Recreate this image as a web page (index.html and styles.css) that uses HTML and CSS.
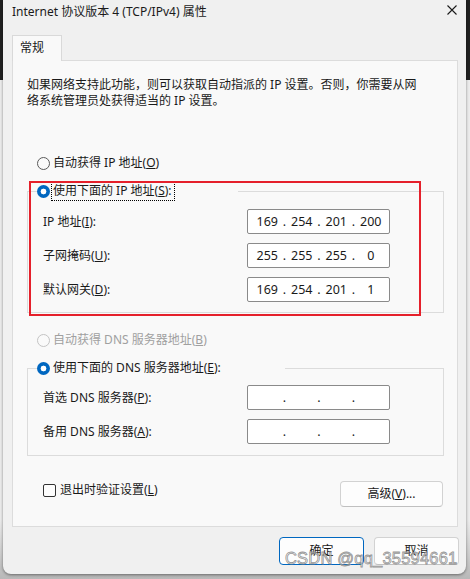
FILE: index.html
```html
<!DOCTYPE html>
<html lang="zh-CN">
<head>
<meta charset="utf-8">
<title>Internet 协议版本 4 (TCP/IPv4) 属性</title>
<link rel="stylesheet" href="styles.css">
</head>
<body>
<div class="window">
  <div class="titlebar">
    <span class="title">Internet 协议版本 4 (TCP/IPv4) 属性</span>
    <svg class="close" width="10" height="10" viewBox="0 0 10 10"><path d="M0.5 0.5 L9.5 9.5 M9.5 0.5 L0.5 9.5" stroke="#1a1a1a" stroke-width="1.1" fill="none"/></svg>
  </div>
  <div class="tabs"><div class="tab">常规</div></div>
  <div class="panel">
    <p class="intro">如果网络支持此功能，则可以获取自动指派的 IP 设置。否则，你需要从网<br>络系统管理员处获得适当的 IP 设置。</p>

    <div class="radio-row"><span class="radio"></span><span>自动获得 IP 地址(<u>O</u>)</span></div>

    <fieldset class="group">
      <legend class="legend ip-legend"><span class="radio on"></span><span class="focus">使用下面的 IP 地址(<u>S</u>):</span></legend>
      <div class="field"><span class="label">IP 地址(<u>I</u>):</span>
        <div class="ipbox"><span class="seg">169</span><span class="dot">.</span><span class="seg">254</span><span class="dot">.</span><span class="seg">201</span><span class="dot">.</span><span class="seg">200</span></div></div>
      <div class="field"><span class="label">子网掩码(<u>U</u>):</span>
        <div class="ipbox"><span class="seg">255</span><span class="dot">.</span><span class="seg">255</span><span class="dot">.</span><span class="seg">255</span><span class="dot">.</span><span class="seg">0</span></div></div>
      <div class="field"><span class="label">默认网关(<u>D</u>):</span>
        <div class="ipbox"><span class="seg">169</span><span class="dot">.</span><span class="seg">254</span><span class="dot">.</span><span class="seg">201</span><span class="dot">.</span><span class="seg">1</span></div></div>
    </fieldset>

    <div class="radio-row dns-auto disabled"><span class="radio"></span><span>自动获得 DNS 服务器地址(<u>B</u>)</span></div>

    <fieldset class="group dns-group">
      <legend class="legend dns-legend"><span class="radio on"></span><span>使用下面的 DNS 服务器地址(<u>E</u>):</span></legend>
      <div class="field first"><span class="label">首选 DNS 服务器(<u>P</u>):</span>
        <div class="ipbox"><span class="seg"></span><span class="dot">.</span><span class="seg"></span><span class="dot">.</span><span class="seg"></span><span class="dot">.</span><span class="seg"></span></div></div>
      <div class="field"><span class="label">备用 DNS 服务器(<u>A</u>):</span>
        <div class="ipbox"><span class="seg"></span><span class="dot">.</span><span class="seg"></span><span class="dot">.</span><span class="seg"></span><span class="dot">.</span><span class="seg"></span></div></div>
    </fieldset>

    <div class="bottom-row">
      <label class="check"><span class="box"></span><span>退出时验证设置(<u>L</u>)</span></label>
      <button class="btn adv">高级(<u>V</u>)...</button>
    </div>

    <div class="highlight"></div>
  </div>
  <div class="footer">
    <button class="btn ok">确定</button>
    <button class="btn">取消</button>
  </div>
  <div class="watermark">CSDN @qq_35594661</div>
</div>
</body>
</html>
```
FILE: styles.css
```css
* { box-sizing: border-box; }
html, body { margin: 0; padding: 0; }
body {
  width: 470px;
  height: 579px;
  overflow: hidden;
  background: linear-gradient(to bottom, #202020 0, #202020 80px, #ececec 80px, #ececec 520px, #b8b8b8 579px);
  font-family: "Noto Sans", "Noto Sans CJK SC", sans-serif;
  font-size: 12px;
  color: #1a1a1a;
}
u { text-decoration: underline; text-underline-offset: 1px; }

.window {
  position: relative;
  margin-left: 3px;
  width: 463px;
  height: 574px;
  background: #f0f0f0;
  border-radius: 0 0 8px 8px;
  box-shadow: 0 1px 3px rgba(0,0,0,0.45);
  display: flex;
  flex-direction: column;
}

.titlebar {
  height: 35px;
  padding: 4px 9px 0 9px;
  display: flex;
  justify-content: space-between;
  align-items: flex-start;
  line-height: 16px;
}
.close { margin-top: 1px; }

.tabs { display: flex; padding-left: 9px; }
.tab {
  position: relative;
  z-index: 1;
  width: 50px;
  height: 26px;
  margin-bottom: -1px;
  padding: 4px 0 0 7px;
  line-height: 16px;
  background: #f9f9f9;
  border: 1px solid #d9d9d9;
  border-bottom: none;
}

.panel {
  position: relative;
  margin: 0 8px 0 9px;
  height: 467px;
  background: #f9f9f9;
  border: 1px solid #dcdcdc;
  display: flex;
  flex-direction: column;
}

.intro {
  margin: 16px 0 0 14px;
  line-height: 16px;
}

.radio-row {
  margin: 44px 0 0 24px;
  height: 20px;
  display: flex;
  align-items: center;
  gap: 3px;
  line-height: 16px;
}
.radio {
  width: 13px;
  height: 13px;
  border-radius: 50%;
  border: 1px solid #5a5a5a;
  background: #fafafa;
  flex: none;
}
.radio.on {
  border: none;
  background: radial-gradient(circle, #ffffff 0 2.6px, #0067c0 3.2px);
}
.disabled { color: #a0a0a0; }
.disabled .radio { border-color: #c4c4c4; }
.dns-auto { margin-top: 17px; }

.group {
  margin: 8px 0 0 14px;
  width: 417px;
  padding: 0 0 10px 0;
  border: 1px solid #dcdcdc;
  min-width: 0;
}
.legend {
  margin-left: 9px;
  padding: 0;
  height: 20px;
  display: flex;
  align-items: center;
  gap: 3px;
  line-height: 16px;
}
.ip-legend { width: 201px; }
.dns-legend { width: 248px; }
.focus { outline: 1px dotted #000; outline-offset: 1px; padding-right: 1px; }

.field {
  display: flex;
  align-items: center;
  margin-top: 9px;
  padding-left: 15px;
}
.field:first-of-type { margin-top: 8px; }
.dns-group { padding-bottom: 11px; }
.dns-group .field.first { margin-top: 7px; }
.label { width: 204px; line-height: 16px; }

.ipbox {
  width: 143px;
  height: 25px;
  background: #ffffff;
  border: 1px solid #8a8a8a;
  border-radius: 2px;
  display: flex;
  justify-content: center;
  align-items: center;
  font-size: 12.5px;
  line-height: 16px;
  padding-left: 1px;
}
.seg { width: 28px; text-align: center; }
.dot { width: 6.5px; text-align: center; }

.bottom-row {
  margin: 24px 14px 0 30px;
  display: flex;
  justify-content: space-between;
  align-items: flex-start;
}
.check {
  height: 20px;
  display: flex;
  align-items: center;
  gap: 4px;
  line-height: 16px;
}
.box {
  width: 13px;
  height: 13px;
  border: 1px solid #333;
  border-radius: 2px;
  background: #fdfdfd;
}

.btn {
  font-family: inherit;
  font-size: 12px;
  color: #1a1a1a;
  background: #fdfdfd;
  border: 1px solid #d2d2d2;
  border-bottom-color: #c0c0c0;
  border-radius: 4px;
  padding: 0;
  line-height: 16px;
}
.adv { width: 103px; height: 26px; margin-top: 1px; }

.footer {
  margin-top: 10px;
  padding-right: 7px;
  display: flex;
  justify-content: flex-end;
  gap: 10px;
}
.footer .btn { width: 85px; height: 28px; }
.btn.ok { border: 1px solid #0067c0; }

.highlight {
  position: absolute;
  left: 16px;
  top: 120px;
  width: 392px;
  height: 135px;
  border: 2px solid #e5202b;
  pointer-events: none;
}

.watermark {
  position: absolute;
  left: 282px;
  top: 549px;
  font-family: "Liberation Sans", Arial, sans-serif;
  font-size: 16.5px;
  letter-spacing: 0.2px;
  color: rgba(245,245,245,0.55);
  -webkit-text-stroke: 0.8px rgba(130,130,130,0.85);
  pointer-events: none;
}
```
